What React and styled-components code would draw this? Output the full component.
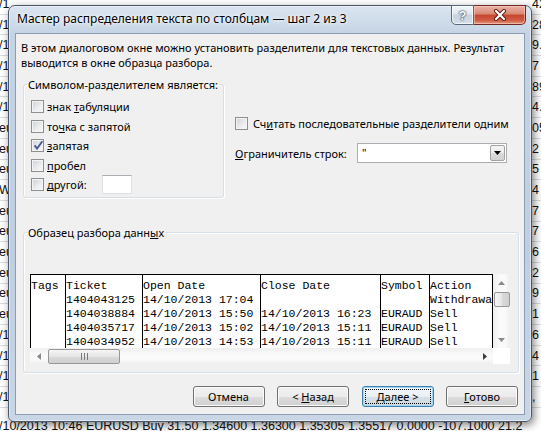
import React from 'react';
import styled, { createGlobalStyle, css } from 'styled-components';

const GlobalStyle = createGlobalStyle`
  html, body {
    margin: 0;
    padding: 0;
  }
  body {
    overflow: hidden;
    background: #fff;
  }
`;

const uiFont = `'Segoe UI', 'Noto Sans', 'Open Sans', sans-serif`;

// ---------- worksheet behind the wizard ----------

const sheetRows = [
  ['/1', '42'],
  ['/10/20', '28'],
  ['/10/20', '9.'],
  ['/10/20', '7'],
  ['/10/20', '89'],
  ['/10/20', '4.'],
  ['eurusd', '05'],
  ['eurusd', '2'],
  ['eurusd', '5'],
  ['Withdr', '4'],
  ['eurusd', '7'],
  ['eurusd', '7'],
  ['eurusd', '6'],
  ['eurusd', '2'],
  ['eurusd', '9'],
  ['eurusd', '1'],
  ['/10/20', '6'],
  ['/10/20', '4'],
  ['/10/20', '1'],
  ['/10/20', ','],
];

const lastSheetLine =
  '/10/2013 10:46 EURUSD Buy 31.50 1.34600 1.36300 1.35305 1.35517 0.0000 -107.1000 21.2';

const Desktop = styled.div`
  position: relative;
  width: 541px;
  height: 431px;
  overflow: hidden;
  background: #fff;
`;

const Sheet = styled.div`
  display: flex;
  flex-direction: column;
  margin-top: -6px;
  font-family: 'Liberation Sans', Arial, sans-serif;
  font-size: 12.5px;
  color: #111;
`;

const SheetRow = styled.div`
  flex: none;
  height: ${(p) => (p.$last ? 38 : 20.7)}px;
  box-sizing: border-box;
  border-bottom: 1px solid #dadcdf;
  display: flex;
  align-items: center;
  justify-content: space-between;
  white-space: nowrap;
  overflow: hidden;
`;

const SheetText = styled.span`
  margin-left: -1px;
`;

const SheetTail = styled.span`
  flex: none;
  width: 9px;
  overflow: hidden;
`;

// ---------- window chrome ----------

const Window = styled.div`
  position: absolute;
  left: 8px;
  top: 5px;
  width: 524px;
  height: 417px;
  box-sizing: border-box;
  display: flex;
  flex-direction: column;
  padding: 0 6px 6px;
  border: 1px solid #4a596c;
  border-radius: 7px 7px 6px 6px;
  background: linear-gradient(180deg, #dbe5f0 0px, #c5d4e5 27px, #bfcfe1 60%, #c8d6e6 100%);
  box-shadow: inset 0 0 0 1px rgba(255, 255, 255, 0.45), 2px 3px 9px rgba(0, 0, 0, 0.5);
  font-family: ${uiFont};
`;

const TitleBar = styled.div`
  flex: none;
  height: 27px;
  display: flex;
  align-items: flex-start;
  justify-content: space-between;
`;

const Caption = styled.div`
  padding: 6px 0 0 2px;
  font-size: 12px;
  line-height: 14px;
  color: #000;
  white-space: nowrap;
  text-shadow: 0 0 5px #fff, 0 0 3px #fff;
`;

const CaptionButtons = styled.div`
  display: flex;
  margin: -1px -1px 0 0;
`;

const CaptionButton = styled.div`
  height: 20px;
  box-sizing: border-box;
  display: flex;
  align-items: center;
  justify-content: center;
  border: 1px solid #5b6779;
  ${(p) =>
    p.$close
      ? css`
          width: 52px;
          border-left: none;
          border-radius: 0 0 5px 0;
          border-color: #6e2a22;
          background: linear-gradient(180deg, #eab2a6 0%, #d98872 45%, #c7452d 50%, #cf5d44 80%, #e69a7f 100%);
          box-shadow: inset 0 0 0 1px rgba(255, 220, 210, 0.5);
        `
      : css`
          width: 23px;
          border-radius: 0 0 0 5px;
          background: linear-gradient(180deg, #f2f6fa 0%, #dde6ef 45%, #c7d3e0 50%, #d3dee9 100%);
          box-shadow: inset 0 0 0 1px rgba(255, 255, 255, 0.7);
        `}
`;

const HelpMark = styled.span`
  font-family: 'Liberation Sans', Arial, sans-serif;
  font-weight: bold;
  font-size: 13px;
  line-height: 1;
  color: #fff;
  text-shadow: 0 0 1px #3d4a5c, 0 0 1px #3d4a5c, 0 0 2px #3d4a5c;
`;

const Client = styled.div`
  flex: 1;
  display: flex;
  flex-direction: column;
  background: #f0f0f0;
  border: 1px solid #8e9caf;
  font-size: 11px;
  color: #000;
`;

// ---------- dialog content ----------

const Key = styled.u`
  text-decoration: underline;
  text-underline-offset: 1px;
`;

const Intro = styled.p`
  margin: 6px 0 0 5px;
  line-height: 15px;
  white-space: nowrap;
`;

const OptionsRow = styled.div`
  display: flex;
  margin: 7px 0 0 7px;
`;

const Group = styled.fieldset`
  margin: 0;
  padding: 0;
  min-width: 0;
  box-sizing: border-box;
  width: ${(p) => p.$width}px;
  height: ${(p) => p.$height}px;
  border: 1px solid #d5dfe5;
  border-radius: 3px;
  box-shadow: inset 1px 1px 0 #fff, 1px 1px 0 #fff;
`;

const GroupTitle = styled.legend`
  margin-left: 3px;
  padding: 0 1px;
  line-height: 15px;
`;

const CheckList = styled.div`
  display: flex;
  flex-direction: column;
  margin: 5px 0 0 7px;
`;

const CheckRow = styled.label`
  height: 19.5px;
  display: flex;
  align-items: center;
  gap: ${(p) => p.$gap || 3}px;
  white-space: nowrap;
`;

const Box = styled.span`
  flex: none;
  position: relative;
  width: 13px;
  height: 13px;
  box-sizing: border-box;
  border: 1px solid #8e8f8f;
  background: linear-gradient(135deg, #cdd1d6 0%, #eceef0 60%, #f8f8f8 100%);
  box-shadow: inset 0 0 0 1px #f4f4f4;
`;

const Tick = styled.svg`
  position: absolute;
  left: 0;
  top: -1px;
`;

const OtherInput = styled.span`
  width: 30px;
  height: 19px;
  margin-left: 12px;
  box-sizing: border-box;
  background: #fff;
  border: 1px solid #dbdfe6;
  border-top-color: #abadb3;
`;

const SideColumn = styled.div`
  display: flex;
  flex-direction: column;
  margin-left: 11px;
  padding-top: 37px;
`;

const ComboRow = styled.div`
  display: flex;
  align-items: center;
  height: 21px;
  margin-top: 9px;
  white-space: nowrap;
`;

const ComboLabel = styled.span`
  width: 122px;
`;

const Combo = styled.div`
  width: 150px;
  height: 20px;
  box-sizing: border-box;
  display: flex;
  padding: 1px;
  background: #fff;
  border: 1px solid #abadb3;
`;

const ComboValue = styled.span`
  flex: 1;
  padding-left: 3px;
  line-height: 15px;
`;

const ComboButton = styled.span`
  width: 15px;
  box-sizing: border-box;
  display: flex;
  align-items: center;
  justify-content: center;
  border: 1px solid #a3a3a3;
  border-radius: 2px;
  background: linear-gradient(180deg, #f4f4f4 0%, #ebebeb 50%, #dddddd 50%, #d2d2d2 100%);
`;

const SampleGroup = styled(Group)`
  margin: 27px 6px 0 7px;
`;

const Preview = styled.div`
  width: 480px;
  height: 90px;
  margin: 34px 0 0 6px;
  display: grid;
  grid-template-columns: 463px 17px;
  grid-template-rows: 74px 16px;
  background: #fff;
`;

const DataGrid = styled.div`
  display: flex;
  overflow: hidden;
  border-top: 1px solid #000;
  font-family: 'Liberation Mono', 'Courier New', monospace;
  font-size: 11.5px;
  line-height: 14px;
  color: #000;
`;

const DataColumn = styled.div`
  flex: none;
  width: ${(p) => p.$width}px;
  box-sizing: border-box;
  padding-top: 4px;
  border-left: 1px solid #000;
  ${(p) => p.$closing && 'border-right: 1px solid #000;'}
  overflow: hidden;
`;

const DataCell = styled.div`
  height: 14px;
  white-space: pre;
  overflow: hidden;
`;

const ScrollTrack = styled.div`
  display: flex;
  flex-direction: ${(p) => (p.$vertical ? 'column' : 'row')};
  background: ${(p) =>
    p.$vertical
      ? 'linear-gradient(90deg, #eeeeee, #fafafa 40%, #fafafa 70%, #efefef)'
      : 'linear-gradient(180deg, #eeeeee, #fafafa 40%, #fafafa 70%, #efefef)'};
`;

const ScrollArrow = styled.div`
  flex: none;
  width: 17px;
  height: ${(p) => (p.$vertical ? 17 : 16)}px;
  display: flex;
  align-items: center;
  justify-content: center;
`;

const ScrollThumb = styled.div`
  flex: none;
  box-sizing: border-box;
  display: flex;
  align-items: center;
  justify-content: center;
  border: 1px solid #979797;
  border-radius: 2px;
  ${(p) =>
    p.$vertical
      ? css`
          height: 15px;
          margin: 1px 0 0 1px;
          width: 16px;
          background: linear-gradient(90deg, #f5f5f5, #e6e6e6 50%, #d9d9d9 51%, #d0d0d0);
        `
      : css`
          width: 72px;
          margin: 1px 0 0 1px;
          height: 15px;
          background: linear-gradient(180deg, #f5f5f5, #e6e6e6 50%, #d9d9d9 51%, #d0d0d0);
        `}
`;

const Spacer = styled.div`
  flex: 1;
`;

const Corner = styled.div`
  background: #fff;
`;

const ButtonRow = styled.div`
  display: flex;
  justify-content: flex-end;
  gap: 12.5px;
  margin: 13px 6px 0 0;
`;

const Button = styled.button`
  width: 72px;
  height: 21px;
  padding: 0;
  box-sizing: border-box;
  font-family: ${uiFont};
  font-size: 11px;
  color: #000;
  border: 1px solid #707070;
  border-radius: 3px;
  background: linear-gradient(180deg, #f2f2f2 0%, #ebebeb 50%, #dddddd 51%, #cfcfcf 100%);
  box-shadow: inset 0 0 0 1px #fbfbfb;
  ${(p) =>
    p.$default &&
    css`
      border-color: #3c7fb1;
      box-shadow: inset 0 0 0 1px #9fd6f3;
      background: linear-gradient(180deg, #f2f7fa 0%, #e9eff3 50%, #d8e1e8 51%, #cdd8e0 100%);
      outline: 1px dotted #000;
      outline-offset: -4px;
    `}
`;

// ---------- small drawings ----------

const CloseGlyph = () => (
  <svg width="14" height="12" viewBox="0 0 14 12">
    <path d="M3 2 L11 10 M11 2 L3 10" stroke="#5a1d15" strokeWidth="4" strokeLinecap="round" />
    <path d="M3 2 L11 10 M11 2 L3 10" stroke="#fff" strokeWidth="2.2" strokeLinecap="round" />
  </svg>
);

const TickGlyph = () => (
  <Tick width="13" height="13" viewBox="0 0 13 13">
    <path d="M2.6 6.4 L5 9.6 L10.4 2.2" fill="none" stroke="#4a5c96" strokeWidth="1.9" />
  </Tick>
);

const Arrow = ({ dir }) => {
  const shapes = {
    up: 'M0 4 L3.5 0 L7 4 Z',
    down: 'M0 0 L7 0 L3.5 4 Z',
    left: 'M4 0 L4 7 L0 3.5 Z',
    right: 'M0 0 L4 3.5 L0 7 Z',
  };
  const flat = dir === 'up' || dir === 'down';
  return (
    <svg width={flat ? 7 : 4} height={flat ? 4 : 7} viewBox={flat ? '0 0 7 4' : '0 0 4 7'}>
      <path d={shapes[dir]} fill={dir === 'right' ? '#3c3c3c' : '#8a8a8a'} />
    </svg>
  );
};

const Grip = () => (
  <svg width="7" height="7" viewBox="0 0 7 7">
    <path d="M0.5 0 V7 M3.5 0 V7 M6.5 0 V7" stroke="#7a7a7a" strokeWidth="1" />
  </svg>
);

// ---------- data ----------

const separators = [
  { label: <>знак <Key>т</Key>абуляции</> },
  { label: <>то<Key>ч</Key>ка с запятой</> },
  { label: <><Key>з</Key>апятая</>, checked: true },
  { label: <><Key>п</Key>робел</> },
  { label: <><Key>д</Key>ругой:</>, other: true },
];

const columns = [
  { width: 35, cells: ['Tags'] },
  { width: 77, cells: ['Ticket', '1404043125', '1404038884', '1404035717', '1404034952'] },
  {
    width: 118,
    cells: ['Open Date', '14/10/2013 17:04', '14/10/2013 15:50', '14/10/2013 15:02', '14/10/2013 14:53'],
  },
  {
    width: 120,
    cells: ['Close Date', '', '14/10/2013 16:23', '14/10/2013 15:11', '14/10/2013 15:11'],
  },
  { width: 49, cells: ['Symbol', '', 'EURAUD', 'EURAUD', 'EURAUD'] },
  { width: 64, cells: ['Action', 'Withdrawal', 'Sell', 'Sell', 'Sell'], closing: true },
];

export default function App() {
  return (
    <>
      <GlobalStyle />
      <Desktop>
        <Sheet>
          {sheetRows.map(([text, tail], i) => (
            <SheetRow key={i}>
              <SheetText>{text}</SheetText>
              <SheetTail>{tail}</SheetTail>
            </SheetRow>
          ))}
          <SheetRow $last>
            <SheetText>{lastSheetLine}</SheetText>
          </SheetRow>
        </Sheet>

        <Window>
          <TitleBar>
            <Caption>Мастер распределения текста по столбцам — шаг 2 из 3</Caption>
            <CaptionButtons>
              <CaptionButton>
                <HelpMark>?</HelpMark>
              </CaptionButton>
              <CaptionButton $close>
                <CloseGlyph />
              </CaptionButton>
            </CaptionButtons>
          </TitleBar>

          <Client>
            <Intro>
              В этом диалоговом окне можно установить разделители для текстовых данных. Результат
              <br />
              выводится в окне образца разбора.
            </Intro>

            <OptionsRow>
              <Group $width={201} $height={121}>
                <GroupTitle>Символом-разделителем является:</GroupTitle>
                <CheckList>
                  {separators.map((s, i) => (
                    <CheckRow key={i}>
                      <Box>{s.checked && <TickGlyph />}</Box>
                      <span>{s.label}</span>
                      {s.other && <OtherInput />}
                    </CheckRow>
                  ))}
                </CheckList>
              </Group>

              <SideColumn>
                <CheckRow $gap={5}>
                  <Box />
                  <span>
                    Сч<Key>и</Key>тать последовательные разделители одним
                  </span>
                </CheckRow>
                <ComboRow>
                  <ComboLabel>
                    <Key>О</Key>граничитель строк:
                  </ComboLabel>
                  <Combo>
                    <ComboValue>"</ComboValue>
                    <ComboButton>
                      <svg width="7" height="4" viewBox="0 0 7 4">
                        <path d="M0 0 L7 0 L3.5 4 Z" fill="#000" />
                      </svg>
                    </ComboButton>
                  </Combo>
                </ComboRow>
              </SideColumn>
            </OptionsRow>

            <SampleGroup $width={496} $height={148}>
              <GroupTitle>
                Образец разбора данн<Key>ы</Key>х
              </GroupTitle>
              <Preview>
                <DataGrid>
                  {columns.map((col, i) => (
                    <DataColumn key={i} $width={col.width} $closing={col.closing}>
                      {col.cells.map((c, j) => (
                        <DataCell key={j}>{c}</DataCell>
                      ))}
                    </DataColumn>
                  ))}
                </DataGrid>
                <ScrollTrack $vertical>
                  <ScrollArrow $vertical>
                    <Arrow dir="up" />
                  </ScrollArrow>
                  <ScrollThumb $vertical />
                  <Spacer />
                  <ScrollArrow $vertical>
                    <Arrow dir="down" />
                  </ScrollArrow>
                </ScrollTrack>
                <ScrollTrack>
                  <ScrollArrow>
                    <Arrow dir="left" />
                  </ScrollArrow>
                  <ScrollThumb>
                    <Grip />
                  </ScrollThumb>
                  <Spacer />
                  <ScrollArrow>
                    <Arrow dir="right" />
                  </ScrollArrow>
                </ScrollTrack>
                <Corner />
              </Preview>
            </SampleGroup>

            <ButtonRow>
              <Button>Отмена</Button>
              <Button>
                &lt; <Key>Н</Key>азад
              </Button>
              <Button $default>
                <Key>Д</Key>алее &gt;
              </Button>
              <Button>
                <Key>Г</Key>отово
              </Button>
            </ButtonRow>
          </Client>
        </Window>
      </Desktop>
    </>
  );
}
